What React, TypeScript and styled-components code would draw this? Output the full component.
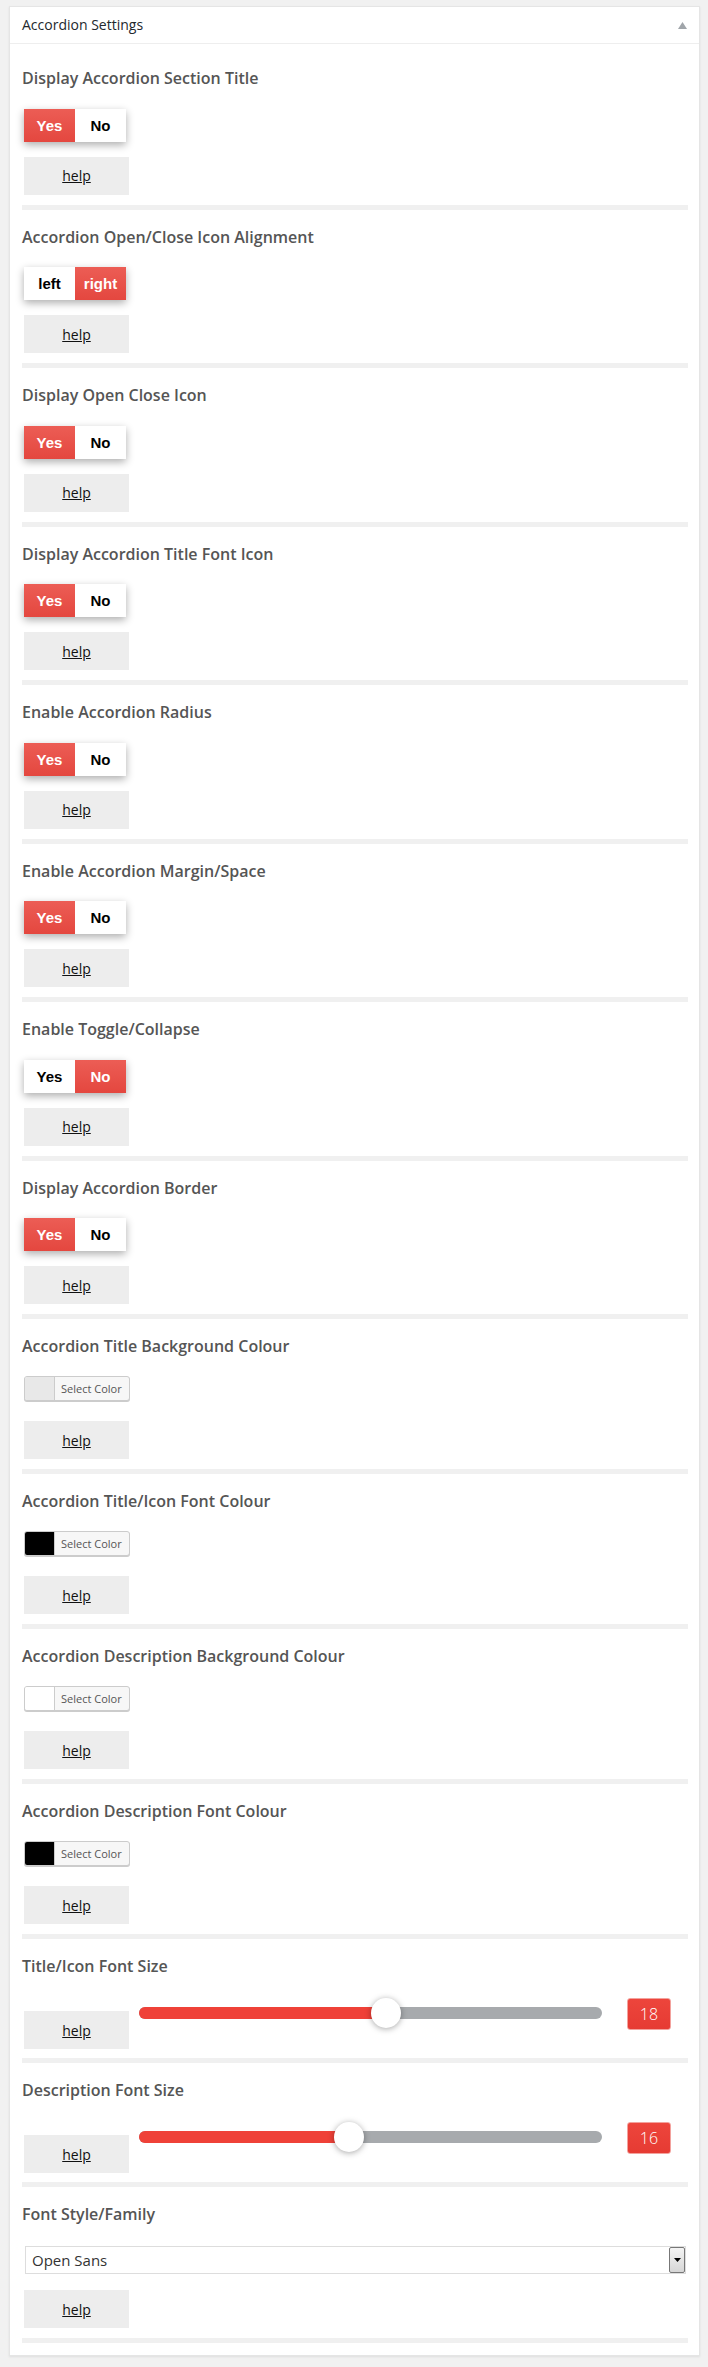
import React from "react";
import styled, { createGlobalStyle } from "styled-components";

const GlobalStyle = createGlobalStyle`
  html, body { margin: 0; padding: 0; background: #f1f1f1; }
  body { font-family: "Open Sans", "Noto Sans", sans-serif; color: #444; }
  * { box-sizing: border-box; }
`;

const Panel = styled.section`
  margin: 6px 8px 11px 9px;
  background: #fff;
  border: 1px solid #e5e5e5;
  box-shadow: 0 1px 2px rgba(0, 0, 0, 0.08);
`;

const PanelHeader = styled.header`
  height: 37px;
  border-bottom: 1px solid #eeeeee;
  display: flex;
  align-items: center;
  justify-content: space-between;
  padding: 0 12px 0 12px;
  font-size: 14px;
  color: #23282d;
`;

const HeaderTitle = styled.h2`
  margin: 0;
  font-size: 14px;
  font-weight: 400;
  line-height: 20px;
`;

const PanelBody = styled.div`
  padding: 7px 11px 12px 12px;
`;

const Item = styled.div<{ $bottom?: number }>`
  display: flex;
  flex-direction: column;
  align-items: flex-start;
  padding: 17px 0 ${(p) => p.$bottom ?? 10}px;
  border-bottom: 5px solid #f0f0f0;
`;

const Title = styled.h3`
  margin: 0;
  font-size: 16px;
  line-height: 20px;
  font-weight: 600;
  color: #555;
`;

const Toggle = styled.div`
  display: inline-flex;
  height: 33px;
  margin: 20.5px 0 0 2px;
  box-shadow: 0 3px 8px rgba(0, 0, 0, 0.32);
`;

const Segment = styled.span<{ $on: boolean }>`
  min-width: 51px;
  padding: 0 8px;
  display: flex;
  align-items: center;
  justify-content: center;
  font-family: "Liberation Sans", Arial, sans-serif;
  font-weight: 700;
  font-size: 15px;
  color: ${(p) => (p.$on ? "#fff" : "#000")};
  background: ${(p) => (p.$on ? "linear-gradient(#ec5d55, #e4473f)" : "#fff")};
`;

const Help = styled.div<{ $gap: number }>`
  width: 105px;
  height: 38px;
  margin: ${(p) => p.$gap}px 0 0 2px;
  background: #ededed;
  display: flex;
  align-items: center;
  justify-content: center;
  flex-shrink: 0;
`;

const HelpLink = styled.a`
  font-size: 14px;
  color: #111;
  text-decoration: underline;
`;

const ColorButton = styled.div`
  display: flex;
  width: 106px;
  height: 25px;
  margin: 20px 0 0 2px;
  border: 1px solid #ccc;
  border-radius: 3px;
  background: #f7f7f7;
  box-shadow: 0 1px 0 #ccc;
  overflow: hidden;
`;

const Swatch = styled.span<{ $color: string }>`
  width: 30px;
  background: ${(p) => p.$color};
  border-right: 1px solid #ccc;
`;

const ColorLabel = styled.span`
  font-size: 11px;
  line-height: 23px;
  color: #555;
  padding: 0 6px;
`;

const SliderRow = styled.div`
  display: flex;
  align-items: flex-start;
  align-self: stretch;
  margin-top: 22px;
`;

const SliderHelpWrap = styled.div`
  margin-top: 13px;
`;

const SliderBox = styled.div`
  flex: 1;
  height: 30px;
  margin-left: 10px;
  display: flex;
  align-items: center;
`;

const Track = styled.div`
  position: relative;
  flex: 1;
  height: 12px;
  border-radius: 6px;
  background: #a7aaad;
`;

const Fill = styled.div`
  height: 100%;
  border-radius: 6px 0 0 6px;
  background: #ef4138;
`;

const Thumb = styled.span`
  position: absolute;
  top: -9px;
  width: 30px;
  height: 30px;
  margin-left: -15px;
  border-radius: 50%;
  background: #fff;
  box-shadow: 0 1px 6px rgba(0, 0, 0, 0.35);
`;

const Badge = styled.span`
  width: 44px;
  height: 32px;
  margin: 0 17px 0 25px;
  border-radius: 3px;
  border: 1px solid #f3a29d;
  background: linear-gradient(#ed453c, #e63b33);
  color: #fff;
  font-size: 16px;
  font-weight: 300;
  display: flex;
  align-items: center;
  justify-content: center;
`;

const SelectBox = styled.div`
  align-self: stretch;
  display: flex;
  align-items: center;
  justify-content: space-between;
  height: 28px;
  margin: 22px 2px 0 3px;
  border: 1px solid #dddddd;
  padding: 0 0 0 6px;
  font-size: 15px;
  color: #333;
`;

const SelectArrow = styled.span`
  width: 16px;
  height: 26px;
  border: 1px solid #777;
  border-radius: 2px;
  background: linear-gradient(#f4f4f4, #d6d6d6);
  display: flex;
  align-items: center;
  justify-content: center;
`;

type ToggleItem = { title: string; options: [string, string]; on: number };
type ColorItem = { title: string; color: string };
type SliderItem = { title: string; value: number; pct: number };

const toggles: ToggleItem[] = [
  { title: "Display Accordion Section Title", options: ["Yes", "No"], on: 0 },
  { title: "Accordion Open/Close Icon Alignment", options: ["left", "right"], on: 1 },
  { title: "Display Open Close Icon", options: ["Yes", "No"], on: 0 },
  { title: "Display Accordion Title Font Icon", options: ["Yes", "No"], on: 0 },
  { title: "Enable Accordion Radius", options: ["Yes", "No"], on: 0 },
  { title: "Enable Accordion Margin/Space", options: ["Yes", "No"], on: 0 },
  { title: "Enable Toggle/Collapse", options: ["Yes", "No"], on: 1 },
  { title: "Display Accordion Border", options: ["Yes", "No"], on: 0 },
];

const colors: ColorItem[] = [
  { title: "Accordion Title Background Colour", color: "#e8e8e8" },
  { title: "Accordion Title/Icon Font Colour", color: "#000000" },
  { title: "Accordion Description Background Colour", color: "#ffffff" },
  { title: "Accordion Description Font Colour", color: "#000000" },
];

const sliders: SliderItem[] = [
  { title: "Title/Icon Font Size", value: 18, pct: 53.3 },
  { title: "Description Font Size", value: 16, pct: 45.4 },
];

const HelpButton = ({ gap }: { gap: number }) => (
  <Help $gap={gap}>
    <HelpLink href="#">help</HelpLink>
  </Help>
);

export default function App() {
  return (
    <>
      <GlobalStyle />
      <Panel>
        <PanelHeader>
          <HeaderTitle>Accordion Settings</HeaderTitle>
          <svg width="9" height="7" viewBox="0 0 9 7">
            <path d="M4.5 0 L9 7 L0 7 Z" fill="#a0a5aa" />
          </svg>
        </PanelHeader>
        <PanelBody>
          {toggles.map((t) => (
            <Item key={t.title}>
              <Title>{t.title}</Title>
              <Toggle>
                {t.options.map((o, i) => (
                  <Segment key={o} $on={i === t.on}>
                    {o}
                  </Segment>
                ))}
              </Toggle>
              <HelpButton gap={15} />
            </Item>
          ))}
          {colors.map((c) => (
            <Item key={c.title}>
              <Title>{c.title}</Title>
              <ColorButton>
                <Swatch $color={c.color} />
                <ColorLabel>Select Color</ColorLabel>
              </ColorButton>
              <HelpButton gap={20} />
            </Item>
          ))}
          {sliders.map((s) => (
            <Item key={s.title} $bottom={9}>
              <Title>{s.title}</Title>
              <SliderRow>
                <SliderHelpWrap>
                  <HelpButton gap={0} />
                </SliderHelpWrap>
                <SliderBox>
                  <Track>
                    <Fill style={{ width: `${s.pct}%` }} />
                    <Thumb style={{ left: `${s.pct}%` }} />
                  </Track>
                </SliderBox>
                <Badge>{s.value}</Badge>
              </SliderRow>
            </Item>
          ))}
          <Item>
            <Title>Font Style/Family</Title>
            <SelectBox>
              <span>Open Sans</span>
              <SelectArrow>
                <svg width="7" height="4" viewBox="0 0 7 4">
                  <path d="M0 0 L7 0 L3.5 4 Z" fill="#000" />
                </svg>
              </SelectArrow>
            </SelectBox>
            <HelpButton gap={16} />
          </Item>
        </PanelBody>
      </Panel>
    </>
  );
}
